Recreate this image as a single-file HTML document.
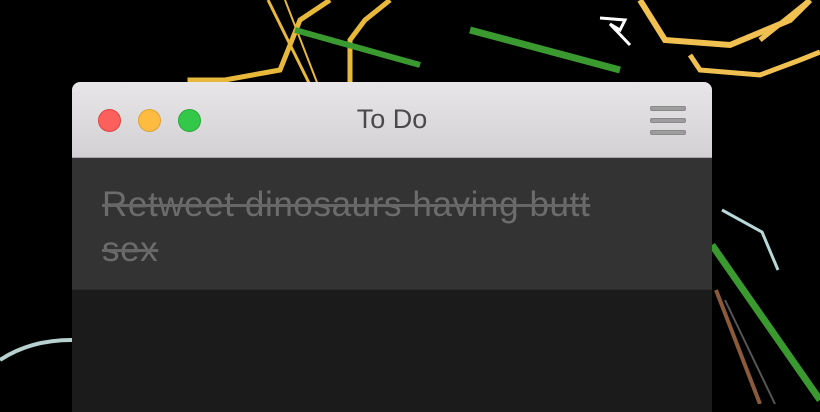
<!DOCTYPE html>
<html><head><style>
html,body{margin:0;padding:0;width:820px;height:404px;overflow:hidden;background:#000;font-family:"Liberation Sans",Arial,sans-serif}
svg.bg{position:absolute;left:0;top:0}
.win{position:absolute;left:72px;top:82px;width:640px;height:330px;border-radius:8px 8px 0 0;overflow:hidden;background:#1b1b1b}
.tb{height:75px;background:linear-gradient(#e8e6e8,#d2d0d2);border-bottom:1px solid #a9a9a9;position:relative}
.dot{position:absolute;top:27px;width:23px;height:23px;border-radius:50%}
.title{position:absolute;left:0;right:0;top:22px;text-align:center;font-size:27px;color:#4a4a4a}
.bar{position:absolute;left:578px;width:36px;height:5px;border-radius:2px;background:#9d9d9d;border:1px solid #8a8a8a;box-sizing:border-box}
.item{height:131px;background:#333333;border-bottom:1px solid #2a2a2a}
.txt{position:absolute;left:30px;top:100px;width:520px;font-size:35px;letter-spacing:0.6px;line-height:45px;color:#6c6c6c;text-decoration:line-through;text-decoration-color:#666;text-decoration-thickness:3px}
</style></head><body>
<svg class="bg" width="820" height="404">
<g fill="none" stroke-linejoin="miter">
<polyline points="190,404 190,80 225,80 280,70 300,20 330,0" stroke="#e8b83a" stroke-width="5"/>
<polyline points="350,85 350,40 365,20 390,0" stroke="#e8b83a" stroke-width="5"/>
<polyline points="268,0 310,85" stroke="#e8b83a" stroke-width="3"/>
<polyline points="285,0 318,85" stroke="#e8b83a" stroke-width="2"/>
<polyline points="295,30 420,65" stroke="#3a9a30" stroke-width="6"/>
<polyline points="600,18 625,20 620,30 610,24 630,45" stroke="#fff" stroke-width="3"/>
<polyline points="640,0 665,40 730,45 790,20 810,0" stroke="#f0c050" stroke-width="6"/>
<polyline points="690,55 700,70 760,75 800,60 820,52" stroke="#f0c050" stroke-width="5"/>
<polyline points="810,0 760,40" stroke="#f0c050" stroke-width="5"/>
<polyline points="470,30 620,70" stroke="#3a9a30" stroke-width="7"/>
<polyline points="722,210 762,232 778,270" stroke="#b8d8d8" stroke-width="3"/>
<polyline points="712,245 820,400" stroke="#3a9a30" stroke-width="7"/>
<polyline points="716,290 760,404" stroke="#8a5a3a" stroke-width="4"/>
<polyline points="725,300 775,404" stroke="#555" stroke-width="2"/>
<path d="M0,360 Q30,340 72,340" stroke="#b8d0d0" stroke-width="4"/>
</g>
</svg>
<div class="win">
<div class="tb">
<div class="dot" style="left:26px;background:#fc605c;border:1px solid #e0443e;box-sizing:border-box"></div>
<div class="dot" style="left:66px;background:#fdbc40;border:1px solid #dea236;box-sizing:border-box"></div>
<div class="dot" style="left:106px;background:#34c84a;border:1px solid #27aa35;box-sizing:border-box"></div>
<div class="title">To Do</div>
<div class="bar" style="top:24px"></div>
<div class="bar" style="top:36px"></div>
<div class="bar" style="top:48px"></div>
</div>
<div class="item"></div>
<div class="txt">Retweet dinosaurs having butt sex</div>
</div>
</body></html>
